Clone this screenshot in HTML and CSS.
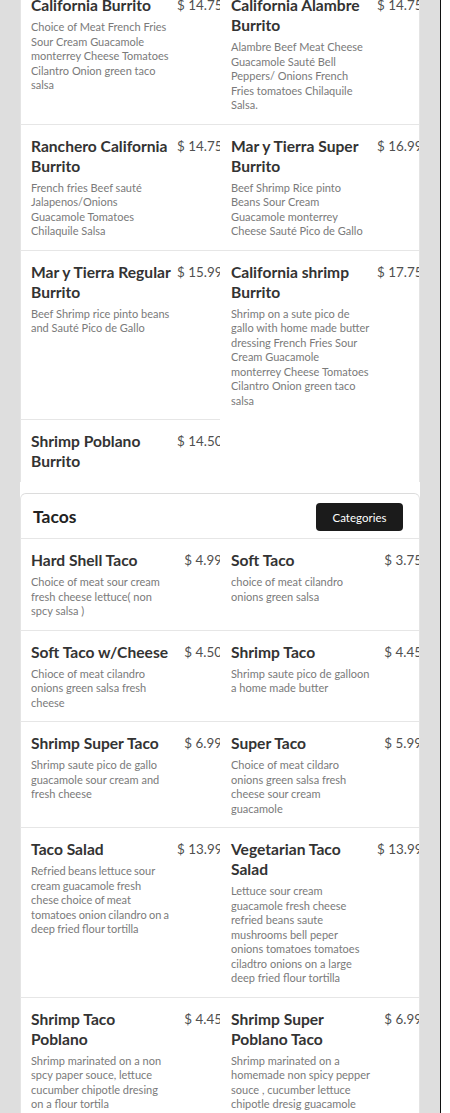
FILE: index.html
```html
<!DOCTYPE html>
<html>
<head>
<meta charset="utf-8">
<link rel="stylesheet" href="styles.css">
</head>
<body>
<div class="frame">
  <div class="menu">
    <section class="card card-burritos">
      <div class="grid">
        <div class="item">
          <div class="info"><div class="name">California Burrito</div><div class="desc">Choice of Meat French Fries Sour Cream Guacamole monterrey Cheese Tomatoes Cilantro Onion green taco salsa</div></div>
          <div class="price">$ 14.75</div>
        </div>
        <div class="item">
          <div class="info"><div class="name">California Alambre Burrito</div><div class="desc">Alambre Beef Meat Cheese Guacamole Sauté Bell Peppers/ Onions French Fries tomatoes Chilaquile Salsa.</div></div>
          <div class="price">$ 14.75</div>
        </div>
        <div class="item">
          <div class="info"><div class="name">Ranchero California Burrito</div><div class="desc">French fries Beef sauté Jalapenos/Onions Guacamole Tomatoes Chilaquile Salsa</div></div>
          <div class="price">$ 14.75</div>
        </div>
        <div class="item">
          <div class="info"><div class="name">Mar y Tierra Super Burrito</div><div class="desc">Beef Shrimp Rice pinto Beans Sour Cream Guacamole monterrey Cheese Sauté Pico de Gallo</div></div>
          <div class="price">$ 16.99</div>
        </div>
        <div class="item">
          <div class="info"><div class="name">Mar y Tierra Regular Burrito</div><div class="desc">Beef Shrimp rice pinto beans and Sauté Pico de Gallo</div></div>
          <div class="price">$ 15.99</div>
        </div>
        <div class="item">
          <div class="info"><div class="name">California shrimp Burrito</div><div class="desc">Shrimp on a sute pico de gallo with home made butter dressing French Fries Sour Cream Guacamole monterrey Cheese Tomatoes Cilantro Onion green taco salsa</div></div>
          <div class="price">$ 17.75</div>
        </div>
        <div class="item">
          <div class="info"><div class="name">Shrimp Poblano Burrito</div></div>
          <div class="price">$ 14.50</div>
        </div>
      </div>
    </section>

    <section class="card card-tacos">
      <header class="card-head">
        <h2 class="card-title">Tacos</h2>
        <button class="cat-btn">Categories</button>
      </header>
      <div class="grid">
        <div class="item">
          <div class="info"><div class="name">Hard Shell Taco</div><div class="desc">Choice of meat sour cream fresh cheese lettuce( non spcy salsa )</div></div>
          <div class="price">$ 4.99</div>
        </div>
        <div class="item">
          <div class="info"><div class="name">Soft Taco</div><div class="desc">choice of meat cilandro onions green salsa</div></div>
          <div class="price">$ 3.75</div>
        </div>
        <div class="item">
          <div class="info"><div class="name">Soft Taco w/Cheese</div><div class="desc">Chioce of meat cilandro onions green salsa fresh cheese</div></div>
          <div class="price">$ 4.50</div>
        </div>
        <div class="item">
          <div class="info"><div class="name">Shrimp Taco</div><div class="desc">Shrimp saute pico de galloon a home made butter</div></div>
          <div class="price">$ 4.45</div>
        </div>
        <div class="item">
          <div class="info"><div class="name">Shrimp Super Taco</div><div class="desc">Shrimp saute pico de gallo guacamole sour cream and fresh cheese</div></div>
          <div class="price">$ 6.99</div>
        </div>
        <div class="item">
          <div class="info"><div class="name">Super Taco</div><div class="desc">Choice of meat cildaro onions green salsa fresh cheese sour cream guacamole</div></div>
          <div class="price">$ 5.99</div>
        </div>
        <div class="item">
          <div class="info"><div class="name">Taco Salad</div><div class="desc desc-tight">Refried beans lettuce sour cream guacamole fresh chese choice of meat tomatoes onion cilandro on a deep fried flour tortilla</div></div>
          <div class="price">$ 13.99</div>
        </div>
        <div class="item">
          <div class="info"><div class="name">Vegetarian Taco Salad</div><div class="desc">Lettuce sour cream guacamole fresh cheese refried beans saute mushrooms bell peper onions tomatoes tomatoes ciladtro onions on a large deep fried flour tortilla</div></div>
          <div class="price">$ 13.99</div>
        </div>
        <div class="item">
          <div class="info"><div class="name">Shrimp Taco Poblano</div><div class="desc">Shrimp marinated on a non spcy paper souce, lettuce cucumber chipotle dresing on a flour tortila</div></div>
          <div class="price">$ 4.45</div>
        </div>
        <div class="item">
          <div class="info"><div class="name">Shrimp Super Poblano Taco</div><div class="desc">Shrimp marinated on a homemade non spicy pepper souce , cucumber lettuce chipotle dresig guacamole fresh cheese</div></div>
          <div class="price">$ 6.99</div>
        </div>
      </div>
    </section>
  </div>
</div>
</body>
</html>
```

FILE: styles.css
```css
* { box-sizing: border-box; }
html, body { margin: 0; padding: 0; background: #fff; }
body {
  font-family: Lato, "Open Sans", sans-serif;
  color: #333;
  height: 1113px;
  overflow: hidden;
}
.frame {
  width: 441px;
  height: 1113px;
  background: #dedede;
  border-right: 1px solid #111;
  overflow: hidden;
}
.menu {
  width: 400px;
  margin: -18px 0 0 20px;
  background: #fff;
  display: flex;
  flex-direction: column;
  gap: 11px;
}
.card {
  background: #fff;
  border-left: 1px solid #e4e4e4;
  border-right: 1px solid #e4e4e4;
}
.card-burritos .grid { margin-top: 0; }
.card-tacos {
  border-top: 1px solid #dcdcdc;
  border-radius: 6px 6px 0 0;
}
.card-head {
  display: flex;
  align-items: center;
  justify-content: space-between;
  padding: 0 16px 0 12px;
  height: 45px;
}
.card-title {
  margin: 0;
  font-size: 17.5px;
  font-weight: 700;
  color: #222;
}
.cat-btn {
  font-family: Lato, sans-serif;
  font-size: 11.5px;
  color: #fff;
  background: #1b1b1b;
  border: 0;
  border-radius: 4px;
  width: 87px;
  height: 28px;
  padding: 0;
  margin-top: 1px;
}
.grid {
  display: flex;
  flex-wrap: wrap;
}
.item {
  width: 50%;
  display: flex;
  align-items: flex-start;
  gap: 4px;
  padding: 11px 0 11px 11px;
  border-top: 1px solid #e6e6e6;
  overflow: hidden;
}
.item:nth-child(odd) { margin-left: -1px; width: calc(50% + 1px); }
.card-burritos .item:first-child,
.card-burritos .item:nth-child(2) { padding-top: 12px; }
.card-tacos .grid { margin-top: -1px; }
.info {
  flex: 0 0 142px;
  width: 142px;
}
.name {
  font-size: 15.6px;
  line-height: 20px;
  font-weight: 700;
  color: #333;
}
.desc {
  margin-top: 5px;
  width: 140px;
  font-size: 11px;
  line-height: 14.5px;
  color: #7a7a7a;
}
.desc-tight {
  word-spacing: -0.5px;
}
.price {
  flex: 0 0 45px;
  text-align: right;
  white-space: nowrap;
  font-size: 13.4px;
  line-height: 20px;
  color: #505050;
}
```
